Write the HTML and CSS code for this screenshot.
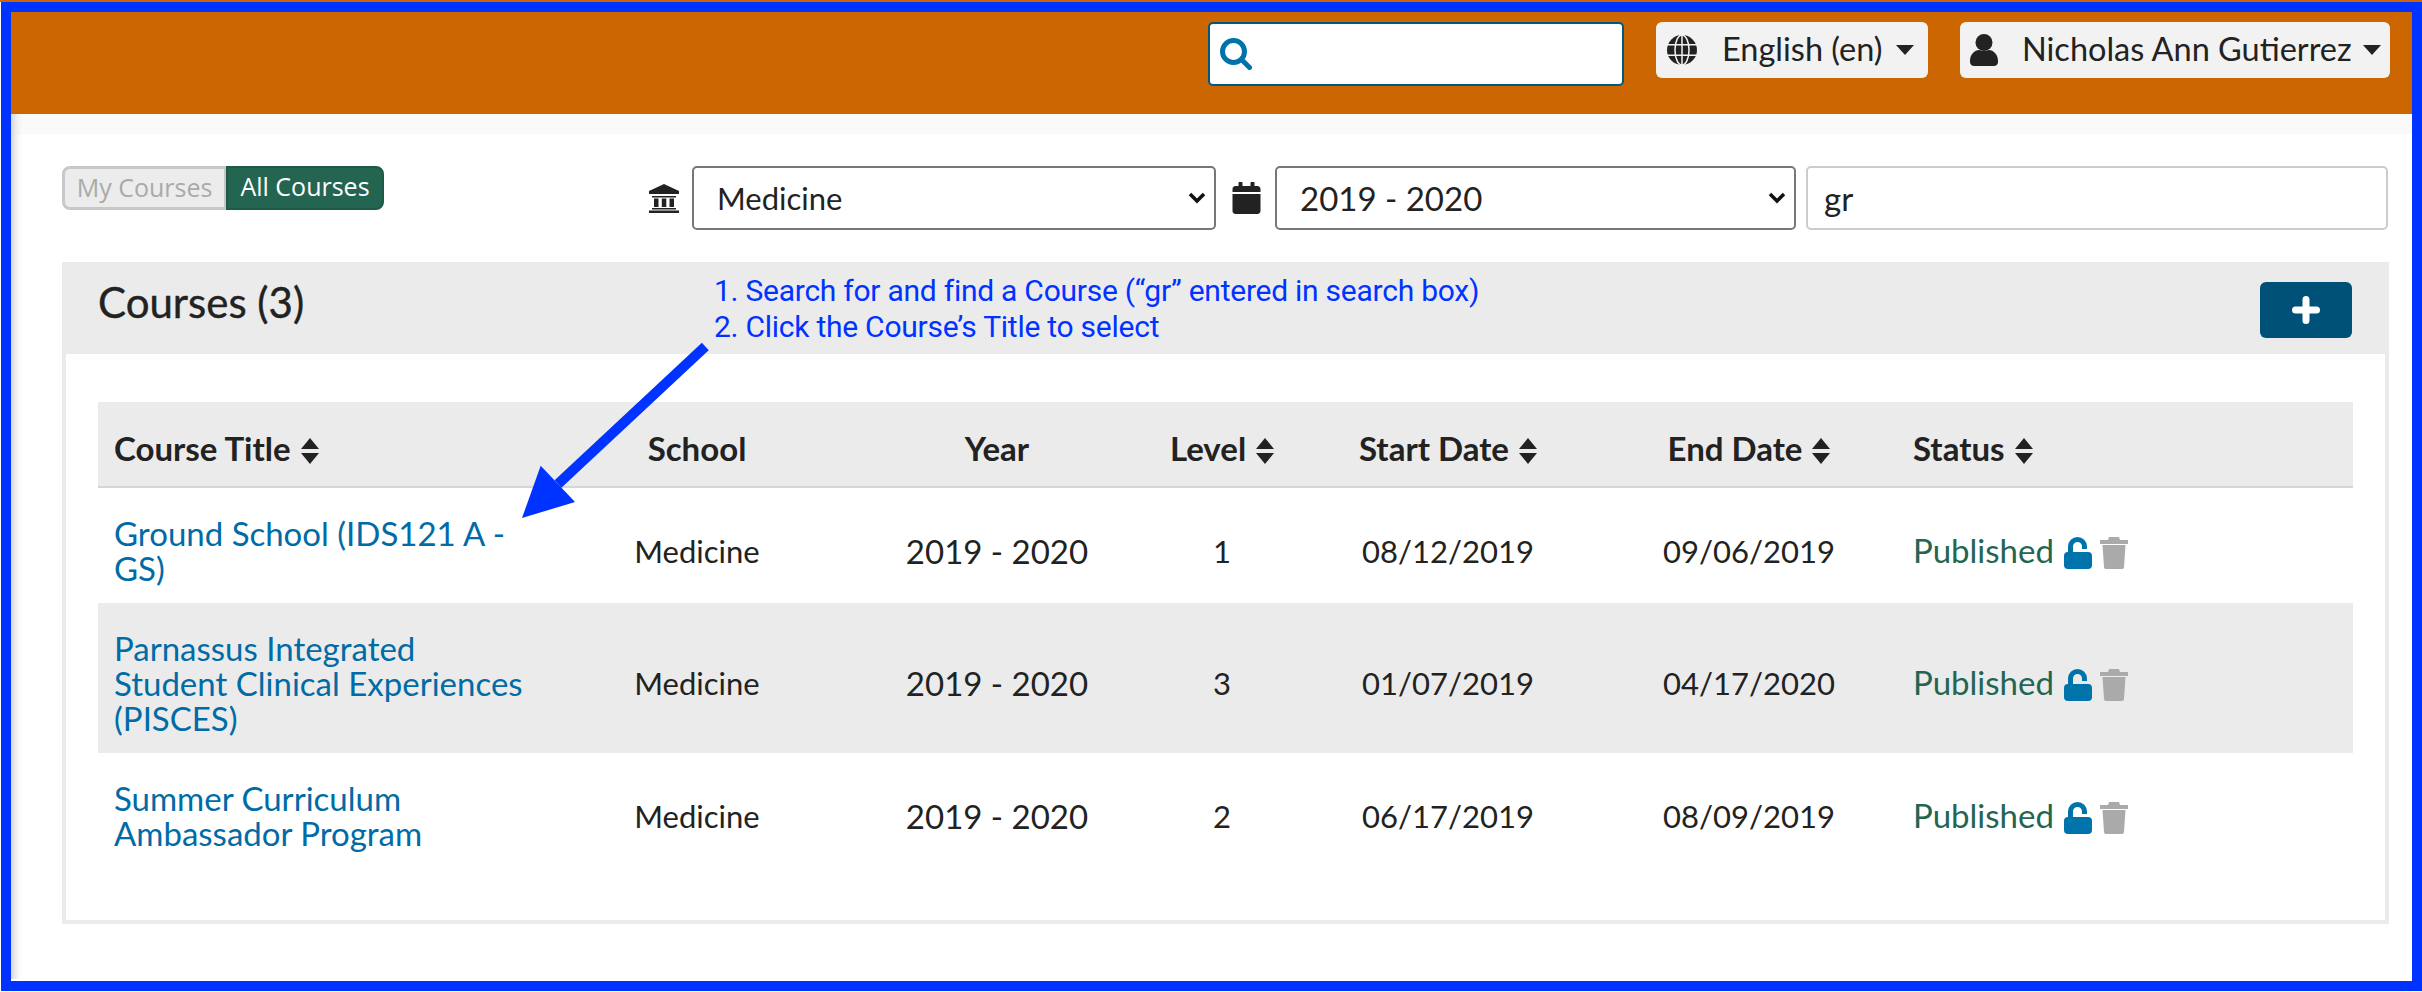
FILE: index.html
```html
<!DOCTYPE html>
<html lang="en">
<head>
    <meta charset="UTF-8">
    <title>Courses</title>
    <link rel="stylesheet" href="styles.css">
</head>
<body>
    <div class="top-edge"></div>
    <div class="frame">
        <header class="topbar">
            <div class="search-box">
                <svg class="search-icon" viewBox="0 0 32 32"><circle cx="13.500" cy="13.500" r="11" fill="none" stroke-width="5"/><path d="M21.500 21.500L29.500 29.500" fill="none" stroke-width="5" stroke-linecap="round"/></svg>
            </div>
            <button class="top-btn lang-btn">
                <svg class="globe-icon" viewBox="0 0 32 32">
                    <circle cx="16" cy="16" r="16" fill="#222"/>
                    <ellipse cx="16" cy="16" rx="7.500" ry="16" fill="none" stroke="#f2f2f2" stroke-width="1.600"/>
                    <path d="M0 10.500h32M0 21.500h32M16 0v32" stroke="#f2f2f2" stroke-width="1.600"/>
                </svg>
                <span>English (en)</span>
                <i class="caret"></i>
            </button>
            <button class="top-btn user-btn">
                <svg class="user-icon" viewBox="0 0 28 32"><circle cx="14" cy="8.500" r="8.500"/><path d="M0 27c0-7 5-11 9-11 1.500 0 3 1 5 1s3.500-1 5-1c4 0 9 4 9 11v1c0 2.500-2 4-4 4H4c-2 0-4-1.500-4-4z"/></svg>
                <span>Nicholas Ann Gutierrez</span>
                <i class="caret"></i>
            </button>
        </header>
        <div class="subbar"></div>

        <main class="content">
            <div class="filters">
                <div class="toggle">
                    <span class="toggle-off">My Courses</span>
                    <span class="toggle-on">All Courses</span>
                </div>
                <div class="filter-fields">
                    <svg class="filter-icon bank" viewBox="0 0 30 29"><path d="M15 0L30 7v3H0V7zM3 12h24v1.500H3zM5 14.500h4.500v8.500H5zM12.800 14.500h4.500v8.500h-4.500zM20.500 14.500H25v8.500h-4.500zM3 24h24v1.500H3zM0 26.500h30V29H0z"/></svg>
                    <select class="field school-select"><option>Medicine</option></select>
                    <svg class="filter-icon cal" viewBox="0 0 448 512"><path d="M0 464c0 26.500 21.500 48 48 48h352c26.500 0 48-21.500 48-48V192H0v272zM400 64h-48V16c0-8.800-7.200-16-16-16h-32c-8.800 0-16 7.200-16 16v48H160V16c0-8.800-7.200-16-16-16h-32c-8.800 0-16 7.200-16 16v48H48C21.500 64 0 85.500 0 112v48h448v-48c0-26.500-21.500-48-48-48z"/></svg>
                    <select class="field year-select"><option>2019 - 2020</option></select>
                    <input class="field text-field" type="text" value="gr">
                </div>
            </div>

            <section class="panel">
                <div class="panel-head">
                    <h2>Courses (3)</h2>
                    <button class="add-btn" aria-label="Add course">
                        <svg viewBox="0 0 28 28"><path d="M14 3.500v21M3.500 14h21" stroke="#fff" stroke-width="7" stroke-linecap="round"/></svg>
                    </button>
                </div>
                <div class="panel-body">
                    <table class="courses">
                        <colgroup>
                            <col class="c-title"><col class="c-school"><col class="c-year"><col class="c-level"><col class="c-start"><col class="c-end"><col>
                        </colgroup>
                        <thead>
                            <tr>
                                <th class="left">Course Title <i class="sort"></i></th>
                                <th>School</th>
                                <th>Year</th>
                                <th>Level <i class="sort"></i></th>
                                <th>Start Date <i class="sort"></i></th>
                                <th>End Date <i class="sort"></i></th>
                                <th class="left status-head">Status <i class="sort"></i></th>
                            </tr>
                        </thead>
                        <tbody>
                            <tr>
                                <td class="left"><a href="#">Ground School (IDS121 A - GS)</a></td>
                                <td>Medicine</td><td class="year">2019 - 2020</td><td>1</td><td>08/12/2019</td><td>09/06/2019</td>
                                <td class="left status"><span class="published">Published</span>
                                    <svg class="lock" viewBox="0 0 28 32"><rect y="15" width="28" height="17" rx="4"/><path d="M6.500 16V9.500a7 7 0 0 1 14 0V12" fill="none" stroke="#0073aa" stroke-width="5"/></svg>
                                    <svg class="trash" viewBox="0 0 28 32"><path d="M0 3h8l1-3h10l1 3h8v4H0zM2.500 8h23L24 30a2 2 0 0 1-2 2H6a2 2 0 0 1-2-2z"/></svg>
                                </td>
                            </tr>
                            <tr>
                                <td class="left"><a href="#">Parnassus Integrated Student Clinical Experiences (PISCES)</a></td>
                                <td>Medicine</td><td class="year">2019 - 2020</td><td>3</td><td>01/07/2019</td><td>04/17/2020</td>
                                <td class="left status"><span class="published">Published</span>
                                    <svg class="lock" viewBox="0 0 28 32"><rect y="15" width="28" height="17" rx="4"/><path d="M6.500 16V9.500a7 7 0 0 1 14 0V12" fill="none" stroke="#0073aa" stroke-width="5"/></svg>
                                    <svg class="trash" viewBox="0 0 28 32"><path d="M0 3h8l1-3h10l1 3h8v4H0zM2.500 8h23L24 30a2 2 0 0 1-2 2H6a2 2 0 0 1-2-2z"/></svg>
                                </td>
                            </tr>
                            <tr>
                                <td class="left"><a href="#">Summer Curriculum Ambassador Program</a></td>
                                <td>Medicine</td><td class="year">2019 - 2020</td><td>2</td><td>06/17/2019</td><td>08/09/2019</td>
                                <td class="left status"><span class="published">Published</span>
                                    <svg class="lock" viewBox="0 0 28 32"><rect y="15" width="28" height="17" rx="4"/><path d="M6.500 16V9.500a7 7 0 0 1 14 0V12" fill="none" stroke="#0073aa" stroke-width="5"/></svg>
                                    <svg class="trash" viewBox="0 0 28 32"><path d="M0 3h8l1-3h10l1 3h8v4H0zM2.500 8h23L24 30a2 2 0 0 1-2 2H6a2 2 0 0 1-2-2z"/></svg>
                                </td>
                            </tr>
                        </tbody>
                    </table>
                </div>
            </section>
        </main>

        <div class="note">
            <div>1. Search for and find a Course (“gr” entered in search box)</div>
            <div>2. Click the Course’s Title to select</div>
        </div>
        <svg class="arrow" viewBox="0 0 2422 992"><path d="M705.300 346.500L558 484" stroke="#0033ff" stroke-width="10" fill="none"/><path d="M522 518L540.700 465.700L575 502Z" fill="#0033ff"/></svg>
    </div>
</body>
</html>
```

FILE: styles.css
```css
* {
    box-sizing: border-box;
}

html, body {
    margin: 0;
    padding: 0;
    height: 100%;
}

body {
    font-family: Lato, "Open Sans", sans-serif;
    color: #222;
    background-color: #fff;
}

.top-edge {
    height: 2px;
    background-color: #cc6600;
}

.frame {
    position: relative;
    width: 2421px;
    height: 989px;
    margin-left: 1px;
    border: 10px solid #0033ff;
    overflow: hidden;
    background-color: #fff;
}

.topbar {
    display: flex;
    justify-content: flex-end;
    align-items: flex-start;
    height: 102px;
    padding: 10px 22px 0 0;
    background-color: #cc6600;
}

.search-box {
    display: flex;
    align-items: center;
    width: 416px;
    height: 64px;
    margin-right: 32px;
    padding-left: 10px;
    background-color: #fff;
    border: 2px solid #00587c;
    border-radius: 5px;
}

.search-icon {
    width: 32px;
    height: 32px;
    fill: none;
    stroke: #0073aa;
}

.top-btn {
    display: flex;
    align-items: center;
    height: 56px;
    padding: 0 0 3px 0;
    border: none;
    border-radius: 6px;
    background-color: #f2f2f2;
    color: #222;
    font-family: inherit;
    font-size: 32.500px;
}

.lang-btn {
    width: 272px;
    margin-right: 32px;
    padding-left: 11px;
}

.user-btn {
    width: 430px;
    padding-left: 10px;
}

.globe-icon {
    width: 30px;
    height: 32px;
    margin: 3px 25px 0 0;
    flex: none;
}

.user-icon {
    width: 28px;
    height: 32px;
    margin: 3px 24px 0 0;
    fill: #222;
    flex: none;
}

.top-btn span {
    text-align: left;
    white-space: nowrap;
}

.caret {
    width: 0;
    height: 0;
    margin: 3px 0 0 11px;
    border-left: 9.500px solid transparent;
    border-right: 9.500px solid transparent;
    border-top: 10px solid #222;
    flex: none;
}

.lang-btn .caret {
    margin-left: 14px;
}

.subbar {
    height: 20px;
    background-color: #fafafa;
    box-shadow: inset 11px 0 8px -8px #ccc;
}

.content {
    padding: 32px 24px 0 51px;
    height: 845px;
    box-shadow: inset 11px 0 8px -8px #ccc;
}

.filters {
    display: flex;
    justify-content: space-between;
    align-items: flex-start;
    height: 96px;
}

.toggle {
    display: flex;
    width: 322px;
    height: 44px;
    font-family: "Open Sans", sans-serif;
    font-size: 25px;
    line-height: 37px;
}

.toggle-off {
    width: 164px;
    text-align: center;
    color: #aaa;
    background-color: #ececec;
    border: 3px solid #c8c8c8;
    border-right-width: 2px;
    border-radius: 8px 0 0 8px;
}

.toggle-on {
    width: 158px;
    text-align: center;
    color: #fff;
    background-color: #236551;
    border: 2px solid #1d5a47;
    border-radius: 0 8px 8px 0;
}

.filter-fields {
    display: flex;
    align-items: center;
}

.filter-icon {
    flex: none;
    fill: #222;
}

.bank {
    width: 30px;
    height: 29px;
    margin-right: 13px;
}

.cal {
    width: 29px;
    height: 32px;
    margin: 0 14px 0 16px;
}

.field {
    height: 64px;
    font-family: Lato, "Open Sans", sans-serif;
    font-size: 33px;
    color: #222;
    background-color: #fff;
    border-radius: 5px;
}

select.field {
    appearance: none;
    border: 2px solid #777;
    padding: 0 30px 0 23px;
    background-image: url("data:image/svg+xml,%3Csvg xmlns='http://www.w3.org/2000/svg' viewBox='0 0 18 12'%3E%3Cpath d='M2 2l7 7 7-7' fill='none' stroke='%23111' stroke-width='3.500'/%3E%3C/svg%3E");
    background-repeat: no-repeat;
    background-position: right 8px center;
    background-size: 18px 12px;
}

.school-select {
    width: 524px;
    font-size: 31px;
}

.year-select {
    width: 521px;
}

.text-field {
    width: 582px;
    margin-left: 10px;
    padding: 0 16px;
    border: 2px solid #ccc;
}

.panel {
    height: 662px;
    border: 4px solid #ebebeb;
    border-top: none;
    margin-right: -1px;
}

.panel-head {
    display: flex;
    justify-content: space-between;
    align-items: center;
    height: 92px;
    padding: 0 33px 0 32px;
    background-color: #ebebeb;
}

.panel-head h2 {
    margin: 0 0 12px 0;
    font-size: 42px;
    font-weight: 400;
    color: #222;
    -webkit-text-stroke: 0.400px #222;
}

.add-btn {
    display: flex;
    align-items: center;
    justify-content: center;
    width: 92px;
    height: 56px;
    margin-top: 4px;
    padding: 0;
    background-color: #005178;
    border: none;
    border-radius: 6px;
}

.add-btn svg {
    width: 28px;
    height: 28px;
}

.panel-body {
    padding: 48px 32px 0 32px;
}

.courses {
    width: 100%;
    border-collapse: collapse;
    table-layout: fixed;
    font-size: 31px;
}

.c-title { width: 456px; }
.c-school { width: 286px; }
.c-year { width: 314px; }
.c-level { width: 136px; }
.c-start { width: 316px; }
.c-end { width: 286px; }

.courses th {
    height: 85px;
    padding-top: 9px;
    font-size: 33px;
    font-weight: 700;
    text-align: center;
    background-color: #ebebeb;
    border-bottom: 2px solid #d6d6d6;
}

.courses td {
    text-align: center;
    padding: 10px 17px 0 17px;
    line-height: 34px;
}

.courses th.left, .courses td.left {
    text-align: left;
    padding-left: 16px;
}

.courses td.left {
    padding-right: 30px;
}

.courses th.status-head, .courses td.status {
    padding-left: 21px;
    padding-right: 0;
}

.courses td.year {
    font-size: 33px;
}

.courses tbody tr:nth-child(1) { height: 116px; }
.courses tbody tr:nth-child(2) { height: 150px; background-color: #ebebeb; }
.courses tbody tr:nth-child(3) { height: 116px; }

.courses a {
    font-size: 33px;
    color: #006ba6;
    text-decoration: none;
}

.published {
    font-size: 33px;
    color: #236551;
}

.sort {
    display: inline-block;
    position: relative;
    width: 18px;
    height: 26px;
    vertical-align: -3px;
    margin-left: 2px;
}

.sort::before, .sort::after {
    content: "";
    position: absolute;
    left: 0;
    border-left: 9px solid transparent;
    border-right: 9px solid transparent;
}

.sort::before {
    top: 0;
    border-bottom: 11px solid #222;
}

.sort::after {
    bottom: 0;
    border-top: 11px solid #222;
}

.lock {
    width: 28px;
    height: 32px;
    margin-left: 2px;
    fill: #0073aa;
    vertical-align: -6px;
}

.trash {
    width: 28px;
    height: 32px;
    fill: #aaa;
    vertical-align: -6px;
}

.note {
    position: absolute;
    left: 703px;
    top: 261px;
    font-family: "Liberation Sans Narrow", Roboto, sans-serif;
    font-size: 30px;
    letter-spacing: -0.250px;
    line-height: 36px;
    color: #0033ff;
    white-space: nowrap;
}

.arrow {
    position: absolute;
    left: -11px;
    top: -12px;
    width: 2422px;
    height: 992px;
    pointer-events: none;
}
```
